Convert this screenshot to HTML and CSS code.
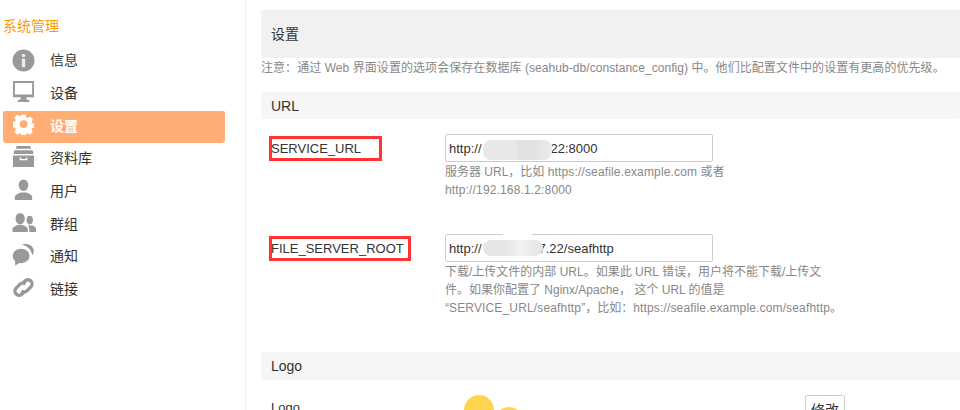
FILE: index.html
```html
<!DOCTYPE html>
<html lang="zh-CN">
<head>
<meta charset="utf-8">
<title>设置</title>
<link rel="stylesheet" href="styles.css">
</head>
<body>
<div class="page">
  <aside class="side">
    <h3 class="side-title">系统管理</h3>
    <ul class="nav">
      <li class="nav-item"><svg class="ico ico-info" viewBox="0 0 24 24"><circle cx="12" cy="12" r="11.500" fill="#999"/><rect x="10.300" y="10" width="3.400" height="9" fill="#fff" opacity=".8"/><circle cx="12" cy="6.800" r="1.900" fill="#fff" opacity=".8"/></svg><span>信息</span></li>
      <li class="nav-item"><svg class="ico" viewBox="0 0 24 24"><path fill="#999" d="M1 1h22v17H15v2l3 1v2H6v-2l3-1v-2H1zM3 3v12h18V3z"/></svg><span>设备</span></li>
      <li class="nav-item active"><svg class="ico ico-gear" viewBox="0 0 24 24"><path fill="#fff" fill-rule="evenodd" d="M9.500 1h5l.6 3.100 1.800.8 2.700-1.800 3.500 3.500-1.800 2.700.8 1.800 3 .6v4.600l-3 .6-.8 1.800 1.800 2.700-3.500 3.500-2.700-1.800-1.800.8-.6 2.600h-5l-.6-2.600-1.800-.8-2.700 1.800-3.500-3.500 1.800-2.700-.8-1.800-2.900-.6V9.700l2.900-.6.8-1.800-1.800-2.700 3.500-3.500 2.700 1.800 1.800-.8zM12 7.500a4.700 4.700 0 1 0 0 9.400 4.700 4.700 0 0 0 0-9.400z" transform="translate(.6 -.2) scale(.96)"/></svg><span>设置</span></li>
      <li class="nav-item"><svg class="ico" viewBox="0 0 24 24"><path fill="#999" d="M5 1h14l1 3H4zM2.500 5.500h19l1 4h-21zM1 11h22v12H1zM8 13v3h8v-3h-1.500v1.500h-5V13z"/></svg><span>资料库</span></li>
      <li class="nav-item"><svg class="ico" viewBox="0 0 24 24"><ellipse cx="12" cy="7.500" rx="5" ry="6" fill="#999"/><path fill="#999" d="M3 23v-3c0-3 4-4 6-5h6c2 1 6 2 6 5v3z"/></svg><span>用户</span></li>
      <li class="nav-item"><svg class="ico ico-wide" viewBox="0 0 26 24"><ellipse cx="9" cy="8" rx="4.800" ry="6" fill="#999"/><path fill="#999" d="M1 22v-3c0-2.500 3.500-3.500 5.500-4.500h5c2 1 5.500 2 5.500 4.500v3z"/><ellipse cx="19" cy="9.500" rx="3.300" ry="4.500" fill="#999"/><path fill="#999" d="M18.500 22v-3.500c0-1.500-1-3-2-3.500h5c2 .8 4 1.500 4 3.500V22z"/></svg><span>群组</span></li>
      <li class="nav-item"><svg class="ico" viewBox="0 0 24 24"><ellipse cx="9.500" cy="13.500" rx="8.800" ry="7.500" fill="#999"/><path fill="#999" d="M3 18l.5 5.500L9 20z"/><path fill="#999" d="M10 1.500c5-1.500 11 0 12.500 5 .6 2.500-.2 5-1.500 6.500 0-4.500-4-10-11-11.500z"/></svg><span>通知</span></li>
      <li class="nav-item"><svg class="ico" viewBox="0 0 24 24"><g fill="none" stroke="#999" stroke-width="3.400"><path d="M10.500 8.200l3-3a4.300 4.300 0 0 1 6.200 6.200l-4 4a4.300 4.300 0 0 1-5.800.2"/><path d="M13.500 15.800l-3 3a4.300 4.300 0 0 1-6.200-6.200l4-4a4.300 4.300 0 0 1 5.800-.2"/></g></svg><span>链接</span></li>
    </ul>
  </aside>
  <main class="main">
    <h2 class="page-head">设置</h2>
    <p class="note">注意：通过 Web 界面设置的选项会保存在数据库 (seahub-db/constance_config) 中。他们比配置文件中的设置有更高的优先级。</p>
    <h3 class="group-head">URL</h3>
    <div class="row row-url">
      <label class="row-label marked">SERVICE_URL</label>
      <div class="row-field">
        <div class="field-box">
          <div class="input">http://<span class="input-gap"></span>22:8000</div>
          <span class="blur"></span>
        </div>
        <p class="hint">服务器 URL，比如 <span class="latin">https://seafile.example.com</span> 或者 <span class="latin">http://192.168.1.2:8000</span></p>
      </div>
    </div>
    <div class="row row-root">
      <label class="row-label marked">FILE_SERVER_ROOT</label>
      <div class="row-field">
        <div class="field-box">
          <div class="input">http://<span class="input-gap gap-root"></span>7.22/seafhttp</div>
          <span class="blur blur-root"></span>
        </div>
        <p class="hint">下载/上传文件的内部 URL。如果此 URL 错误，用户将不能下载/上传文件。如果你配置了 Nginx/Apache， 这个 URL 的值是 “<span class="latin">SERVICE_URL/seafhttp</span>”，比如：<span class="latin">https://seafile.example.com/seafhttp</span>。</p>
      </div>
    </div>
    <h3 class="group-head group-logo">Logo</h3>
    <div class="row row-logo">
      <label class="row-label">Logo</label>
      <div class="logo-pic">
        <span class="dot dot-big"></span>
        <span class="dot dot-small"></span>
      </div>
      <button class="btn" type="button">修改</button>
    </div>
  </main>
</div>
</body>
</html>
```
FILE: styles.css
```css
*, *::before, *::after { box-sizing: border-box; }
html, body { margin: 0; padding: 0; height: 410px; overflow: hidden; background: #fff; }
body { font: 14px/20px "Liberation Sans", "Noto Sans CJK SC", sans-serif; color: #333; text-spacing-trim: space-all; }
.page { display: flex; width: 960px; height: 410px; overflow: hidden; }

.side { flex: none; width: 246px; border-right: 1px solid #eee; padding: 16px 20px 0 3px; }
.side-title { margin: 0 0 8px; font-size: 14px; line-height: 20px; font-weight: 400; color: #ff9800; }
.nav { margin: 0; padding: 0; list-style: none; }
.nav-item { display: flex; align-items: center; height: 32.700px; padding-left: 9px; color: #333; }
.nav-item span { margin-left: 15px; }
.ico { flex: none; width: 23px; height: 23px; margin-bottom: 3px; }
.ico-info { margin-bottom: 0; }
.ico-gear { width: 21px; height: 21px; margin: 0 1px 4px; }
.ico-wide { width: 26px; margin-left: -1.500px; margin-right: -1.500px; }
.active { height: 33.700px; margin-bottom: -1px; border-top: 2px solid transparent; padding-bottom: 2px; border-radius: 3px; background: #ffad73; background-clip: padding-box; color: #fff; font-weight: 700; }

.main { flex: 1; min-width: 0; padding: 10px 0 0 15px; }
.page-head { margin: 0; height: 48px; padding-left: 10px; background: #f1f1f1; border-radius: 2px; font-size: 14px; line-height: 48px; font-weight: 400; color: #333; }
.note { margin: 0; padding-top: 1px; height: 34px; font-size: 12px; line-height: 18px; letter-spacing: .06px; color: #888; white-space: nowrap; }
.group-head { margin: 0; height: 27px; padding-left: 10px; background: #f6f6f6; border-radius: 2px; font-size: 14px; line-height: 29px; font-weight: 400; color: #333; }
.group-logo { height: 28px; line-height: 28px; }

.row { display: flex; align-items: flex-start; }
.row-url { margin-top: 15px; height: 100px; }
.row-root { height: 118px; }
.row-logo { margin-top: 15px; }
.row-label { flex: none; width: 184px; height: 25px; padding-left: 10px; line-height: 26px; margin-top: 2px; font-size: 13px; color: #333; }
.marked { position: relative; }
.marked::after { content: ""; position: absolute; left: 8px; top: 0; height: 25px; border: 3px solid #f33; }
.row-url .marked::after { width: 113px; }
.row-root .marked::after { width: 142px; }
.row-field { flex: none; width: 268px; }
.field-box { position: relative; width: 268px; }
.input { height: 28px; padding-left: 3px; border: 1px solid #ccc; border-radius: 2px; background: #fff; font-size: 13px; line-height: 27px; color: #333; white-space: nowrap; }
.input-gap { display: inline-block; width: 69px; }
.gap-root { width: 57px; }
.blur { position: absolute; left: 38px; top: 6px; width: 69px; height: 20px; border-radius: 8px; background: linear-gradient(90deg, #e8e8e8 0, #e8e8e8 48%, #e2e2e2 52%, #e2e2e2 75%, #ececec 100%); }
.blur-root { width: 60px; height: 16px; background: linear-gradient(90deg, #e6e6e6 0, #e6e6e6 40%, #f2f2f2 60%, #e4e4e4 100%); }
.blur-root::before { content: ""; position: absolute; left: 20px; top: -9px; width: 29px; height: 4px; background: #fff; }
.hint { margin: 0; padding-top: 1px; width: 290px; font-size: 12px; line-height: 18px; color: #888; }
.row-root .hint { width: 400px; }
.latin { letter-spacing: .15px; }

.row-logo .row-label { margin-top: 3px; line-height: 20px; }
.logo-pic { flex: none; position: relative; width: 360px; height: 50px; }
.dot { position: absolute; border-radius: 50%; background: #ffd54f; }
.dot-big { left: 19px; top: 0; width: 30px; height: 30px; }
.dot-small { left: 49px; top: 12px; width: 30px; height: 30px; }
.btn { flex: none; width: 40px; height: 30px; padding: 0; border: 1px solid #ccc; border-radius: 2px; background: #fff; font: inherit; color: #333; }
```
